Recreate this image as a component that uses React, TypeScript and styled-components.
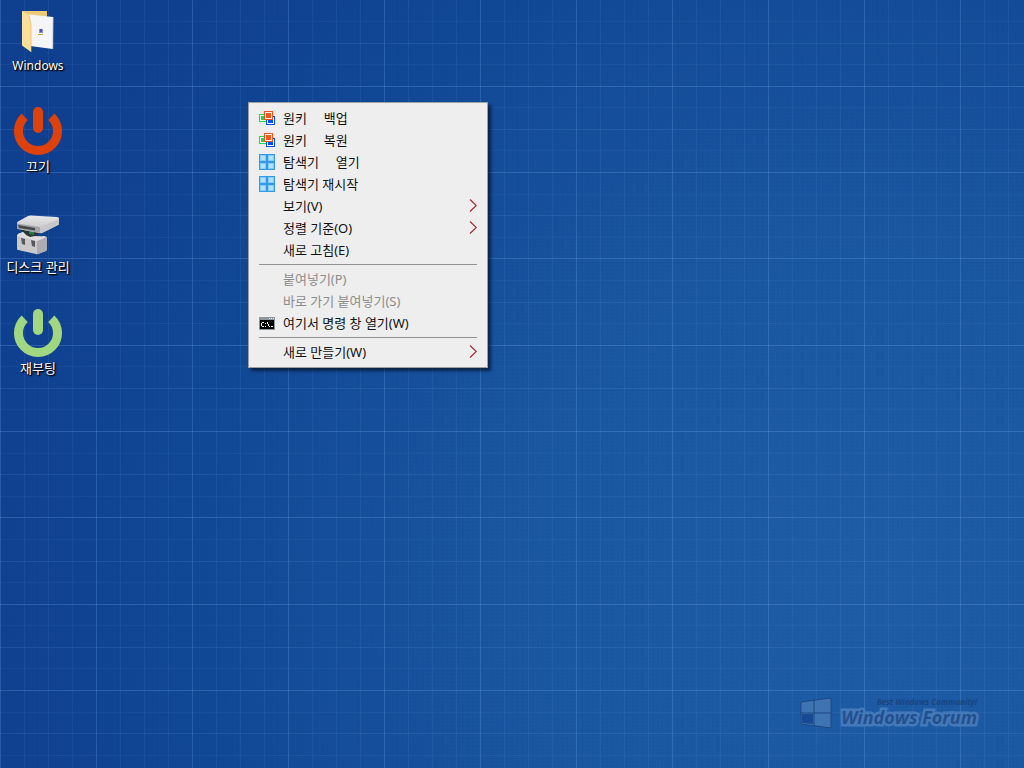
import React from "react";
import styled, { createGlobalStyle } from "styled-components";

const GlobalStyle = createGlobalStyle`
  * { box-sizing: border-box; }
  html, body, #root { height: 100%; }
  body {
    margin: 0;
    overflow: hidden;
    font-family: "Noto Sans", "Noto Sans CJK KR", sans-serif;
    font-size: 13px;
  }
`;

const line = (alpha: number) => `rgba(110, 170, 235, ${alpha})`;
const rows = [0, 86, 173];
const subRows = [22, 43, 65, 108, 130, 151, 194, 216, 237];

const rowStops = [...rows.map((y) => [y, 0.28]), ...subRows.map((y) => [y, y % 43 < 2 ? 0.14 : 0.07])]
  .sort((a, b) => a[0] - b[0])
  .map(([y, a]) => `transparent ${y}px, ${line(a)} ${y}px, ${line(a)} ${y + 1}px, transparent ${y + 1}px`)
  .join(", ");

const Desktop = styled.main`
  position: relative;
  min-height: 100vh;
  background:
    linear-gradient(90deg, ${line(0.18)} 1px, transparent 1px) 0 0 / 96px 100%,
    linear-gradient(90deg, ${line(0.1)} 1px, transparent 1px) 0 0 / 24px 100%,
    linear-gradient(${rowStops}) 0 172px / 100% 259px,
    linear-gradient(90deg, rgba(0, 30, 100, 0.03) 1px, transparent 1px) 2px 0 / 5px 100%,
    linear-gradient(rgba(0, 30, 100, 0.03) 1px, transparent 1px) 0 2px / 100% 4px,
    radial-gradient(ellipse 900px 900px at 84% 75%, #205da7 0%, #1b58a2 35%, #114896 75%, #0f4090 100%);
`;

const Shortcuts = styled.nav`
  display: flex;
  flex-direction: column;
  align-items: flex-start;
  gap: 29px;
  width: 76px;
  padding-top: 6px;
`;

const Shortcut = styled.button<{ $latin?: boolean }>`
  display: flex;
  flex-direction: column;
  align-items: center;
  width: 100%;
  height: 72px;
  padding: 0;
  border: 0;
  background: none;
  color: #fff;
  font-family: inherit;
  font-size: ${(p) => (p.$latin ? 12 : 13)}px;
  line-height: ${(p) => (p.$latin ? 20 : 18)}px;
  white-space: nowrap;
  text-shadow: 1px 1px 2px #000, 1px 1px 1px #000;
  svg { display: block; flex: none; }
`;

const Menu = styled.div`
  position: absolute;
  left: 248px;
  top: 102px;
  width: 240px;
  padding: 4px 10px;
  border: 1px solid #a0a0a0;
  background: #eee;
  box-shadow: 3px 3px 3px rgba(0, 0, 0, 0.55);
`;

const Item = styled.button`
  display: grid;
  grid-template-columns: 16px 1fr 8px;
  column-gap: 8px;
  align-items: center;
  width: 100%;
  height: 22px;
  padding: 0;
  border: 0;
  background: none;
  color: #111;
  font: inherit;
  line-height: 22px;
  text-align: left;
  white-space: pre;
  &:disabled { color: #8c8c8c; }
  svg { display: block; }
`;

const Separator = styled.hr`
  height: 1px;
  margin: 3px 0;
  border: 0;
  background: #919191;
`;

const Brand = styled.div`
  position: absolute;
  right: 47px;
  bottom: 39px;
  display: flex;
  align-items: center;
  gap: 9px;
`;

const BrandText = styled.div`
  display: flex;
  flex-direction: column;
  font-family: "Open Sans", sans-serif;
  font-style: italic;
  color: #23508f;
`;

const Slogan = styled.span`
  align-self: flex-end;
  font-size: 8px;
  line-height: 8px;
  font-weight: 700;
  color: #184480;
`;

const BrandName = styled.strong`
  font-size: 18px;
  line-height: 22px;
  -webkit-text-stroke: 5px #4479b9;
  paint-order: stroke fill;
`;

const FolderIcon = () => (
  <svg width="48" height="50" viewBox="0 0 48 50" aria-hidden="true">
    <path d="M8 5h25v34H8z" fill="#edcb78" />
    <path d="M15 8.5L39 11l-.3 32L16 40z" fill="#f5f5f8" />
    <path d="M39 11l-.3 32" stroke="#d9dbe2" strokeWidth="0.8" />
    <path d="M8 5l7 4.500L17 18v28l-9-6.500z" fill="#fde09a" />
    <path d="M15 9.500L17 18v28" fill="none" stroke="#e6c069" strokeWidth="0.8" />
    <path d="M25 23h4v4h-4z" fill="#8b93dc" />
    <path d="M26 23h2v3h-2z" fill="#4a50c8" />
    <path d="M24 28h5v1h-5z" fill="#c8ae4c" />
  </svg>
);

const PowerIcon = ({ color }: { color: string }) => (
  <svg width="48" height="50" viewBox="0 0 48 50" aria-hidden="true">
    <path d="M10.700 9.800A19.500 19.500 0 1 0 37.300 9.800" fill="none" stroke={color} strokeWidth="9" />
    <path d="M24 5v16" stroke={color} strokeWidth="10" strokeLinecap="round" />
  </svg>
);

const DiskIcon = () => (
  <svg width="48" height="50" viewBox="0 0 48 50" aria-hidden="true">
    <defs>
      <linearGradient id="slab" x1="0" y1="0" x2="0" y2="1">
        <stop offset="0" stopColor="#e9e9ea" />
        <stop offset="1" stopColor="#bdbdc0" />
      </linearGradient>
    </defs>
    <path d="M4 19l20 3v7L11 27z" fill="#2c3538" />
    <path d="M3 28q0-1 1-2l5-2 3 3 5 0 3 1 5 0 8 2v11q0 1-1 2l-8 3q-1 .5-2 0l-18-4q-1-.3-1-1z" fill="#c9c9cc" />
    <path d="M23 33l10-4v12q0 1-1 2l-9 3z" fill="#adadb1" />
    <path d="M3 28l20 5 10-4-3-1-7 1-3-1-8-1-3-3-5 2z" fill="#dededf" />
    <path d="M12 23l9 1v4l-5 1-4-2z" fill="#2c3538" />
    <path d="M15 23l5 1v3l-5-1z" fill="#24803a" />
    <path d="M7 30l4 1v6l-3-1zM17 32l4 1v6l-3-1z" fill="#57585b" />
    <path d="M3 15q0-1 1-1.500L14 8q1-.6 3-.5L43 9q2 0 2 1.500v5q0 1-1 1.500l-16 8q-1 .5-2 .3L4 21q-1-.2-1-1.200z" fill="url(#slab)" />
    <path d="M3 15.500L26 19v5.800L4 21q-1-.2-1-1z" fill="#a3a4a8" />
    <path d="M4 17l17 3v2.500L5 20z" fill="#46494c" />
    <path d="M26 19l19-8v5.500L28 25h-2z" fill="#c7c7ca" />
  </svg>
);

const SquaresIcon = () => (
  <svg width="16" height="16" viewBox="0 0 16 16" shapeRendering="crispEdges" aria-hidden="true">
    <path d="M0 4h9v8H0z" fill="#10e048" />
    <path d="M1 5h7v6H1z" fill="#fff" />
    <path d="M2 6h5v4H2z" fill="#10e048" />
    <path d="M7 6h9v9H7z" fill="#0050f4" />
    <path d="M8 7h7v7H8z" fill="#fff" />
    <path d="M9 8h5v5H9z" fill="#0050f4" />
    <path d="M5 1h9v9H5z" fill="#f4501c" />
    <path d="M6 2h7v7H6z" fill="#fff" />
    <path d="M7 3h5v5H7z" fill="#fa561e" />
  </svg>
);

const TilesIcon = () => (
  <svg width="16" height="16" viewBox="0 0 16 16" shapeRendering="crispEdges" aria-hidden="true">
    <path d="M0 0h16v16H0z" fill="#3598e6" />
    <path d="M1 1h6v6H1zM9 1h6v6H9zM1 9h6v6H1zM9 9h6v6H9z" fill="#83cbf8" />
    <path d="M2 2h4v4H2zM10 2h4v4h-4zM2 10h4v4H2zM10 10h4v4h-4z" fill="#aee2ff" />
  </svg>
);

const ConsoleIcon = () => (
  <svg width="16" height="16" viewBox="0 0 16 16" shapeRendering="crispEdges" aria-hidden="true">
    <path d="M0 2h16v13H0z" fill="#8d979f" />
    <path d="M10 3h1v1h-1zM12 3h1v1h-1zM14 3h1v1h-1z" fill="#e8eef4" />
    <path d="M1 5h14v9H1z" fill="#000" />
    <path d="M3 7h2v1H3zM2 8h1v3H2zM3 11h2v1H3zM6 8h1v1H6zM6 11h1v1H6zM8 7h1v2H8zM9 9h1v2H9zM10 11h1v1H10zM12 11h2v1h-2z" fill="#fff" />
  </svg>
);

const Chevron = () => (
  <svg width="8" height="14" viewBox="0 0 8 14" aria-hidden="true">
    <path d="M1 0.500L7.300 6.500L1 12.500" fill="none" stroke="#a8202c" strokeWidth="1.1" />
  </svg>
);

type Entry = { label: string; icon?: React.ReactNode; sub?: boolean; off?: boolean };
const groups: Entry[][] = [
  [
    { label: "원키     백업", icon: <SquaresIcon /> },
    { label: "원키     복원", icon: <SquaresIcon /> },
    { label: "탐색기     열기", icon: <TilesIcon /> },
    { label: "탐색기 재시작", icon: <TilesIcon /> },
    { label: "보기(V)", sub: true },
    { label: "정렬 기준(O)", sub: true },
    { label: "새로 고침(E)" },
  ],
  [
    { label: "붙여넣기(P)", off: true },
    { label: "바로 가기 붙여넣기(S)", off: true },
    { label: "여기서 명령 창 열기(W)", icon: <ConsoleIcon /> },
  ],
  [{ label: "새로 만들기(W)", sub: true }],
];

export default function App() {
  return (
    <Desktop>
      <GlobalStyle />
      <Shortcuts aria-label="바탕 화면">
        <Shortcut $latin><FolderIcon />Windows</Shortcut>
        <Shortcut><PowerIcon color="#dd420b" />끄기</Shortcut>
        <Shortcut><DiskIcon />디스크 관리</Shortcut>
        <Shortcut><PowerIcon color="#a2d782" />재부팅</Shortcut>
      </Shortcuts>
      <Menu role="menu">
        {groups.map((group, i) => (
          <React.Fragment key={i}>
            {i > 0 && <Separator />}
            {group.map((entry) => (
              <Item key={entry.label} role="menuitem" disabled={entry.off} aria-haspopup={entry.sub ? "menu" : undefined}>
                <span>{entry.icon}</span>
                <span>{entry.label}</span>
                {entry.sub && <Chevron />}
              </Item>
            ))}
          </React.Fragment>
        ))}
      </Menu>
      <Brand>
        <svg width="32" height="32" viewBox="0 0 32 32" aria-hidden="true">
          <path d="M1 5l30-4v30L1 27z" fill="#3f74b3" stroke="#1d4681" />
          <path d="M14 3v26M1 16h30" stroke="#1d4681" strokeWidth="1" />
          <path d="M2 17h11v10L2 26z" fill="#174a93" />
        </svg>
        <BrandText>
          <Slogan>Best Windows Community!</Slogan>
          <BrandName>Windows Forum</BrandName>
        </BrandText>
      </Brand>
    </Desktop>
  );
}
